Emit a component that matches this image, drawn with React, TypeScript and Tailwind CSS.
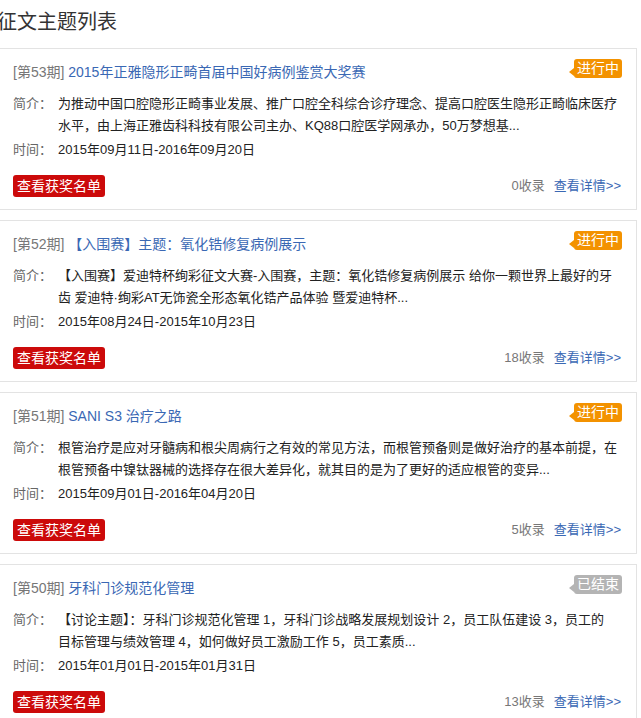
import React from "react";

type Item = {
  no: string;
  title: string;
  lines: string[];
  time: string;
  count: string;
  status: "ongoing" | "ended";
};

const items: Item[] = [
  {
    no: "[第53期]",
    title: "2015年正雅隐形正畸首届中国好病例鉴赏大奖赛",
    lines: [
      "为推动中国口腔隐形正畸事业发展、推广口腔全科综合诊疗理念、提高口腔医生隐形正畸临床医疗",
      "水平，由上海正雅齿科科技有限公司主办、KQ88口腔医学网承办，50万梦想基...",
    ],
    time: "2015年09月11日-2016年09月20日",
    count: "0收录",
    status: "ongoing",
  },
  {
    no: "[第52期]",
    title: "【入围赛】主题：氧化锆修复病例展示",
    lines: [
      "【入围赛】爱迪特杯绚彩征文大赛-入围赛，主题：氧化锆修复病例展示 给你一颗世界上最好的牙",
      "齿 爱迪特·绚彩AT无饰瓷全形态氧化锆产品体验 暨爱迪特杯...",
    ],
    time: "2015年08月24日-2015年10月23日",
    count: "18收录",
    status: "ongoing",
  },
  {
    no: "[第51期]",
    title: "SANI S3 治疗之路",
    lines: [
      "根管治疗是应对牙髓病和根尖周病行之有效的常见方法，而根管预备则是做好治疗的基本前提，在",
      "根管预备中镍钛器械的选择存在很大差异化，就其目的是为了更好的适应根管的变异...",
    ],
    time: "2015年09月01日-2016年04月20日",
    count: "5收录",
    status: "ongoing",
  },
  {
    no: "[第50期]",
    title: "牙科门诊规范化管理",
    lines: [
      "【讨论主题】：牙科门诊规范化管理 1，牙科门诊战略发展规划设计 2，员工队伍建设 3，员工的",
      "目标管理与绩效管理 4，如何做好员工激励工作 5，员工素质...",
    ],
    time: "2015年01月01日-2015年01月31日",
    count: "13收录",
    status: "ended",
  },
];

function Badge({ status }: { status: Item["status"] }) {
  const ongoing = status === "ongoing";
  return (
    <div className="absolute right-[14px] top-[10px] flex items-center">
      <span
        className={
          "mt-[6px] h-0 w-0 border-y-[4px] border-r-[5px] border-y-transparent " +
          (ongoing ? "border-r-[#f39200]" : "border-r-[#b4b4b4]")
        }
      />
      <span
        className={
          "h-[19px] rounded-[3px] px-[3px] text-[14px] leading-[19px] text-white " +
          (ongoing ? "bg-[#f39200]" : "bg-[#b4b4b4]")
        }
      >
        {ongoing ? "进行中" : "已结束"}
      </span>
    </div>
  );
}

function Card({ item }: { item: Item }) {
  return (
    <div className="relative mb-[10px] w-[638px] border border-[#e3e3e3] bg-white px-[13px] pb-[12px] pt-[11px]">
      <Badge status={item.status} />
      <div className="h-[24px] text-[14px] leading-[24px]">
        <span className="text-[#777777]">{item.no}</span>{" "}
        <span className="text-[#3a68b4]">{item.title}</span>
      </div>
      <div className="mt-[9px] flex text-[13px] leading-[22px]">
        <div className="w-[45px] shrink-0 text-[#666666]">简介：</div>
        <div className="text-[#222222]">
          {item.lines.map((l, i) => (
            <div key={i} className="whitespace-nowrap">
              {l}
            </div>
          ))}
        </div>
      </div>
      <div className="mt-[2px] flex text-[13px] leading-[22px]">
        <div className="w-[45px] shrink-0 text-[#666666]">时间：</div>
        <div className="text-[#222222]">{item.time}</div>
      </div>
      <div className="mt-[14px] flex h-[22px] items-center justify-between pr-[2px]">
        <span className="h-[22px] rounded-[3px] bg-[#cc0a0a] px-[4px] text-[14px] leading-[22px] text-white">
          查看获奖名单
        </span>
        <div className="flex items-center gap-[9px] text-[13px] leading-[22px]">
          <span className="text-[#777777]">{item.count}</span>
          <span className="text-[#3a68b4]">查看详情&gt;&gt;</span>
        </div>
      </div>
    </div>
  );
}

export default function App() {
  return (
    <div
      className="min-h-screen bg-white"
      style={{ fontFamily: '"Liberation Sans", "Noto Sans CJK SC", Arial, sans-serif' }}
    >
      <div className="-ml-[3px] h-[48px] pt-[8px] text-[20px] leading-[28px] text-[#333333]">
        征文主题列表
      </div>
      <div className="-ml-px">
        {items.map((it) => (
          <Card key={it.no} item={it} />
        ))}
      </div>
    </div>
  );
}
